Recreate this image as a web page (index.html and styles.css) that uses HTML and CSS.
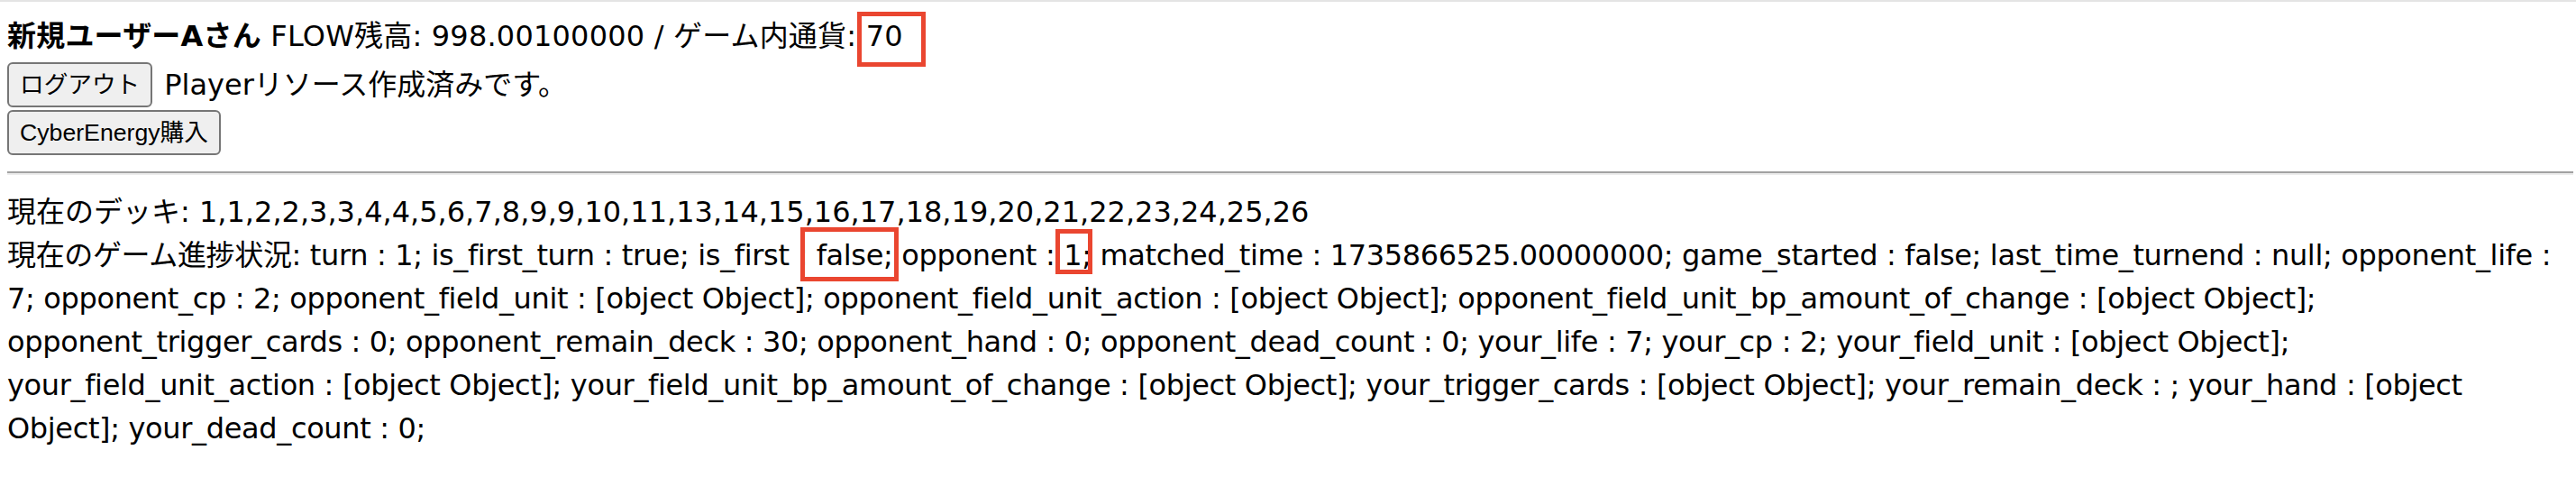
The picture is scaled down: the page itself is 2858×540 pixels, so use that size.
FILE: index.html
```html
<!DOCTYPE html>
<html lang="ja">
<head>
<meta charset="utf-8">
<title>Game status</title>
<link rel="stylesheet" href="styles.css">
</head>
<body>
<div class="page">
  <div class="user"><b>新規ユーザーAさん</b> FLOW残高: 998.00100000 / ゲーム内通貨: <span class="mark mark-coin">70</span></div>
  <div class="row row-logout"><button class="btn">ログアウト</button><span class="msg">Playerリソース作成済みです。</span></div>
  <div class="row row-buy"><button class="btn">CyberEnergy購入</button></div>
  <hr class="sep">
  <div class="deck">現在のデッキ: 1,1,2,2,3,3,4,4,5,6,7,8,9,9,10,11,13,14,15,16,17,18,19,20,21,22,23,24,25,26</div>
  <div class="status">現在のゲーム進捗状況: turn : 1; is_first_turn : true; is_first : <span class="mark mark-false">false;</span> opponent : <span class="mark mark-one">1;</span> matched_time : 1735866525.00000000; game_started : false; last_time_turnend : null; opponent_life :<br>7; opponent_cp : 2; opponent_field_unit : [object Object]; opponent_field_unit_action : [object Object]; opponent_field_unit_bp_amount_of_change : [object Object];<br>opponent_trigger_cards : 0; opponent_remain_deck : 30; opponent_hand : 0; opponent_dead_count : 0; your_life : 7; your_cp : 2; your_field_unit : [object Object];<br>your_field_unit_action : [object Object]; your_field_unit_bp_amount_of_change : [object Object]; your_trigger_cards : [object Object]; your_remain_deck : ; your_hand : [object<br>Object]; your_dead_count : 0;</div>
</div>
</body>
</html>
```
FILE: styles.css
```css
html, body {
  margin: 0;
  padding: 0;
  background: #ffffff;
}

body {
  border-top: 2px solid #e4e4e4;
  font-family: "DejaVu Sans", "Noto Sans CJK JP", sans-serif;
  font-size: 32px;
  line-height: 48px;
  color: #000000;
}

.page {
  padding: 14px 3px 0 8px;
}

.user {
  letter-spacing: 0.2px;
}

.user b {
  font-weight: bold;
}

.row {
  display: flex;
  align-items: center;
}

.row-logout {
  margin-top: 5px;
  gap: 13px;
}

.row-buy {
  margin-top: 3px;
}

.btn {
  box-sizing: border-box;
  height: 50px;
  margin: 0;
  padding: 0 12px;
  font-family: "Liberation Sans", "Noto Sans CJK JP", sans-serif;
  font-size: 26.67px;
  line-height: 30px;
  color: #000000;
  background: #efefef;
  border: 2px solid #767676;
  border-radius: 6px;
}

.msg {
  line-height: 48px;
}

.sep {
  height: 0;
  margin: 18px 0 17px 0;
  border: 0;
  border-top: 2px solid #a2a2a2;
  border-bottom: 2px solid #ececec;
}

.status {
  white-space: nowrap;
  letter-spacing: -0.35px;
}

.mark {
  position: relative;
}

.mark::after {
  content: "";
  position: absolute;
  box-sizing: border-box;
  border: 5px solid #ea4630;
  pointer-events: none;
}

.mark-coin::after {
  left: -10px;
  right: -25px;
  top: -8px;
  bottom: -15px;
}

.mark-false::after {
  left: -18px;
  right: -7px;
  top: -12px;
  bottom: -10px;
}

.mark-one::after {
  left: -9px;
  right: -1px;
  top: -10px;
  bottom: -2px;
}
```
